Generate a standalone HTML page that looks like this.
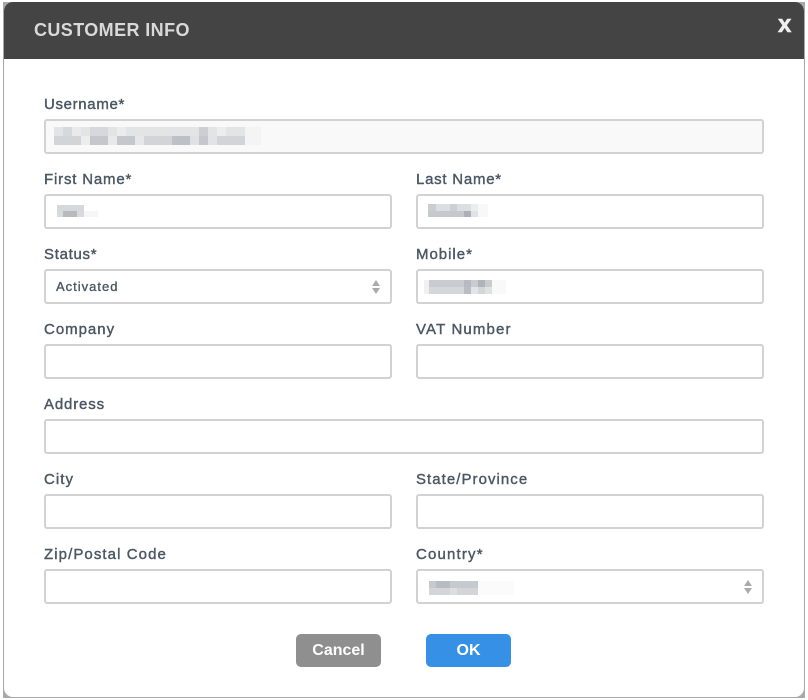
<!DOCTYPE html>
<html>
<head>
<meta charset="utf-8">
<style>
html,body{margin:0;padding:0;background:#fff;width:808px;height:700px;overflow:hidden;font-family:"Liberation Sans",sans-serif}
div,span,svg{position:absolute;box-sizing:border-box}
#edge{left:3px;top:2px;width:802px;height:696px;background:#a8a8a8}
#win{left:4px;top:2px;width:800px;height:695px;background:#fff;border-radius:9px;overflow:hidden}
#head{left:0;top:0;width:800px;height:57px;background:#444}
#title{left:30px;top:17px;font-size:18px;line-height:22px;font-weight:bold;color:#d9d9d9;letter-spacing:.4px;white-space:nowrap}
#x{left:774px;top:9px;font-size:24px;line-height:28px;font-weight:bold;color:#f0f0f0;-webkit-text-stroke:.6px #f0f0f0}
.l{font-size:15px;line-height:18px;color:#4b5763;white-space:nowrap;-webkit-text-stroke:.4px #4b5763}
.i{height:35px;border:2px solid #d2d2d2;border-radius:3px;background:#fff}
.a{left:44px;width:348px}.b{left:416px;width:348px}.w{left:44px;width:720px}
.btn{top:634px;width:85px;height:33px;border-radius:5px;color:#fff;font-size:16px;line-height:33px;font-weight:bold;text-align:center}
</style>
</head>
<body>
<div id="edge"></div>
<div id="win">
  <div id="head"></div>
  <div id="title">CUSTOMER INFO</div>
  <div id="x">x</div>
</div>

<div class="l" style="left:44px;top:96px;letter-spacing:.66px">Username*</div>
<div class="i w" style="top:119px;background:#f9f9f9"></div>

<div class="l" style="left:44px;top:171px;letter-spacing:.82px">First Name*</div>
<div class="i a" style="top:194px"></div>
<div class="l" style="left:416px;top:171px;letter-spacing:.75px">Last Name*</div>
<div class="i b" style="top:194px"></div>

<div class="l" style="left:44px;top:246px;letter-spacing:.7px">Status*</div>
<div class="i a" style="top:269px"></div>
<div style="left:56px;top:278px;font-size:13px;line-height:17px;color:#4b5763;letter-spacing:1px;-webkit-text-stroke:.35px #4b5763">Activated</div>
<div class="l" style="left:416px;top:246px;letter-spacing:.98px">Mobile*</div>
<div class="i b" style="top:269px"></div>

<div class="l" style="left:44px;top:321px;letter-spacing:.98px">Company</div>
<div class="i a" style="top:344px"></div>
<div class="l" style="left:416px;top:321px;letter-spacing:1.15px">VAT Number</div>
<div class="i b" style="top:344px"></div>

<div class="l" style="left:44px;top:396px;letter-spacing:.84px">Address</div>
<div class="i w" style="top:419px"></div>

<div class="l" style="left:44px;top:471px;letter-spacing:1.05px">City</div>
<div class="i a" style="top:494px"></div>
<div class="l" style="left:416px;top:471px;letter-spacing:1.05px">State/Province</div>
<div class="i b" style="top:494px"></div>

<div class="l" style="left:44px;top:546px;letter-spacing:1.08px">Zip/Postal Code</div>
<div class="i a" style="top:569px"></div>
<div class="l" style="left:416px;top:546px;letter-spacing:1.17px">Country*</div>
<div class="i b" style="top:569px"></div>

<svg width="808" height="700" style="left:0;top:0" shape-rendering="crispEdges">
  <g fill="#ababab" shape-rendering="auto">
    <path d="M376 280l4 6h-8z"/><path d="M372 288h8l-4 6z"/>
    <path d="M748 580l4 6h-8z"/><path d="M744 588h8l-4 6z"/>
  </g>
  <g>
    <rect x="54" y="127" width="191" height="9" fill="#e2e4e6"/>
    <rect x="54" y="136" width="191" height="9" fill="#d2d4d8"/>
    <rect x="245" y="127" width="16" height="18" fill="#f4f4f4"/>
    <rect x="63" y="127" width="9" height="9" fill="#d6d9dc"/>
    <rect x="72" y="127" width="9" height="9" fill="#e9eaeb"/>
    <rect x="90" y="127" width="18" height="9" fill="#d6d8db"/>
    <rect x="117" y="127" width="9" height="9" fill="#ebeced"/>
    <rect x="199" y="127" width="9" height="9" fill="#ccced2"/>
    <rect x="217" y="127" width="9" height="9" fill="#ecedee"/>
    <rect x="81" y="136" width="9" height="9" fill="#eceded"/>
    <rect x="90" y="136" width="18" height="9" fill="#c4c7cc"/>
    <rect x="108" y="136" width="9" height="9" fill="#e8e9ea"/>
    <rect x="117" y="136" width="18" height="9" fill="#c4c7cc"/>
    <rect x="135" y="136" width="9" height="9" fill="#e6e7e9"/>
    <rect x="172" y="136" width="18" height="9" fill="#bdc0c6"/>
    <rect x="190" y="136" width="9" height="9" fill="#e0e1e4"/>
    <rect x="199" y="136" width="9" height="9" fill="#c4c7cc"/>
    <rect x="208" y="136" width="9" height="9" fill="#e2e3e6"/>
  </g>
  <g>
    <rect x="57" y="205" width="27" height="6" fill="#d6d8db"/>
    <rect x="57" y="211" width="27" height="6" fill="#d8dadd"/>
    <rect x="63" y="211" width="14" height="6" fill="#b7babf"/>
    <rect x="84" y="211" width="14" height="6" fill="#f6f6f6"/>
  </g>
  <g>
    <rect x="428" y="204" width="50" height="7" fill="#dcdee1"/>
    <rect x="428" y="211" width="50" height="6" fill="#c5c8cd"/>
    <rect x="428" y="204" width="8" height="7" fill="#c9ccd0"/>
    <rect x="450" y="204" width="7" height="7" fill="#ccd0d4"/>
    <rect x="471" y="204" width="7" height="7" fill="#eceded"/>
    <rect x="464" y="211" width="7" height="6" fill="#adb1b7"/>
    <rect x="471" y="211" width="7" height="6" fill="#dfe3e7"/>
    <rect x="478" y="204" width="10" height="13" fill="#f8f8f8"/>
  </g>
  <g>
    <rect x="424" y="280" width="68" height="7" fill="#c8cbcf"/>
    <rect x="424" y="287" width="68" height="7" fill="#d4d6da"/>
    <rect x="424" y="280" width="5" height="14" fill="#f0f0f0"/>
    <rect x="464" y="280" width="7" height="7" fill="#b7bac0"/>
    <rect x="478" y="280" width="7" height="7" fill="#b0b3b9"/>
    <rect x="464" y="287" width="7" height="7" fill="#babdc3"/>
    <rect x="471" y="287" width="7" height="7" fill="#e2e4e6"/>
    <rect x="485" y="287" width="7" height="7" fill="#dfe1e3"/>
    <rect x="492" y="280" width="14" height="14" fill="#f9f9f9"/>
  </g>
  <g>
    <rect x="429" y="581" width="49" height="7" fill="#c6c9ce"/>
    <rect x="429" y="588" width="49" height="7" fill="#d3d5d9"/>
    <rect x="436" y="581" width="14" height="7" fill="#b8bbc1"/>
    <rect x="450" y="588" width="7" height="7" fill="#dcdee1"/>
    <rect x="478" y="581" width="36" height="14" fill="#fbfbfb"/>
  </g>
</svg>

<div class="btn" style="left:296px;background:#8f8f8f">Cancel</div>
<div class="btn" style="left:426px;background:#3590e6">OK</div>
</body>
</html>
